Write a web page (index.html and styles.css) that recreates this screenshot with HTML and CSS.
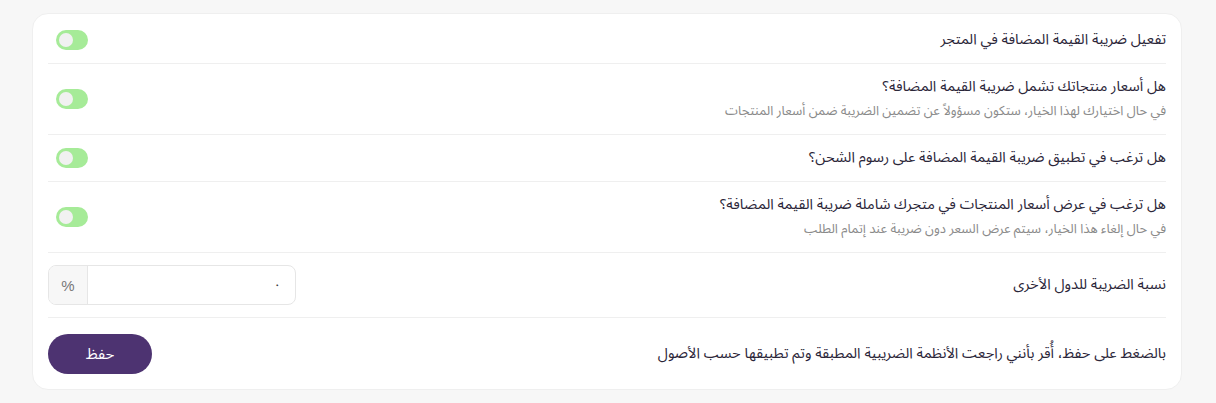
FILE: index.html
```html
<!DOCTYPE html>
<html lang="ar" dir="rtl">
<head>
<meta charset="utf-8">
<link rel="stylesheet" href="styles.css">
</head>
<body>
<div class="card">
  <div class="row">
    <div class="text"><div class="title">تفعيل ضريبة القيمة المضافة في المتجر</div></div>
    <span class="toggle"><span class="knob"></span></span>
  </div>
  <div class="row row-2">
    <div class="text">
      <div class="title">هل أسعار منتجاتك تشمل ضريبة القيمة المضافة؟</div>
      <div class="desc">في حال اختيارك لهذا الخيار، ستكون مسؤولاً عن تضمين الضريبة ضمن أسعار المنتجات</div>
    </div>
    <span class="toggle"><span class="knob"></span></span>
  </div>
  <div class="row">
    <div class="text"><div class="title">هل ترغب في تطبيق ضريبة القيمة المضافة على رسوم الشحن؟</div></div>
    <span class="toggle"><span class="knob"></span></span>
  </div>
  <div class="row row-2">
    <div class="text">
      <div class="title">هل ترغب في عرض أسعار المنتجات في متجرك شاملة ضريبة القيمة المضافة؟</div>
      <div class="desc">في حال إلغاء هذا الخيار، سيتم عرض السعر دون ضريبة عند إتمام الطلب</div>
    </div>
    <span class="toggle"><span class="knob"></span></span>
  </div>
  <div class="row row-input">
    <div class="text"><div class="title">نسبة الضريبة للدول الأخرى</div></div>
    <div class="input-group">
      <div class="input">٠</div>
      <div class="addon">%</div>
    </div>
  </div>
  <div class="row row-action">
    <div class="text"><div class="title">بالضغط على حفظ، أُقر بأنني راجعت الأنظمة الضريبية المطبقة وتم تطبيقها حسب الأصول</div></div>
    <button class="btn">حفظ</button>
  </div>
</div>
</body>
</html>
```
FILE: styles.css
```css
html, body {
  margin: 0;
  background: #f7f7f7;
}
body {
  padding: 13px 34px 13px 32px;
  font-family: "Noto Sans Arabic", "DejaVu Sans", "Noto Sans", sans-serif;
  color: #2b2639;
}
.card {
  background: #fff;
  border: 1px solid #efefef;
  border-radius: 16px;
  padding: 3px 15px 0;
  box-sizing: border-box;
  width: 1150px;
}
.row {
  display: flex;
  align-items: center;
  justify-content: space-between;
  padding: 12px 0;
  border-bottom: 1px solid #efefef;
}
.row-2 { padding: 12px 0; }
.row-input { padding: 12px 0; }
.row-action { padding: 16px 0 15px; border-bottom: none; }
.title {
  font-size: 14.6px;
  line-height: 22px;
  color: #2b2639;
}
.desc {
  margin-top: 2px;
  font-size: 13px;
  line-height: 22px;
  color: #8a8a8a;
}
.toggle {
  display: flex;
  align-items: center;
  justify-content: flex-end;
  width: 32px;
  height: 20px;
  margin-left: 8px;
  border-radius: 10px;
  background: #a6eb98;
  box-sizing: border-box;
  padding: 0 3px;
}
.knob {
  width: 14px;
  height: 14px;
  border-radius: 50%;
  background: #f1f1f1;
}
.input-group {
  display: flex;
  width: 248px;
  height: 40px;
  border: 1px solid #e6e6e6;
  border-radius: 8px;
  box-sizing: border-box;
  overflow: hidden;
}
.input {
  flex: 1;
  display: flex;
  align-items: center;
  padding: 0 14px;
  font-size: 13px;
  color: #333;
}
.addon {
  width: 38px;
  display: flex;
  align-items: center;
  justify-content: center;
  background: #f7f7f7;
  border-right: 1px solid #e6e6e6;
  font-size: 15px;
  color: #777;
  font-family: "Liberation Sans", sans-serif;
}
.btn {
  width: 104px;
  height: 40px;
  border: none;
  border-radius: 20px;
  background: #4d3371;
  color: #fff;
  font-family: inherit;
  font-size: 15px;
}
```
